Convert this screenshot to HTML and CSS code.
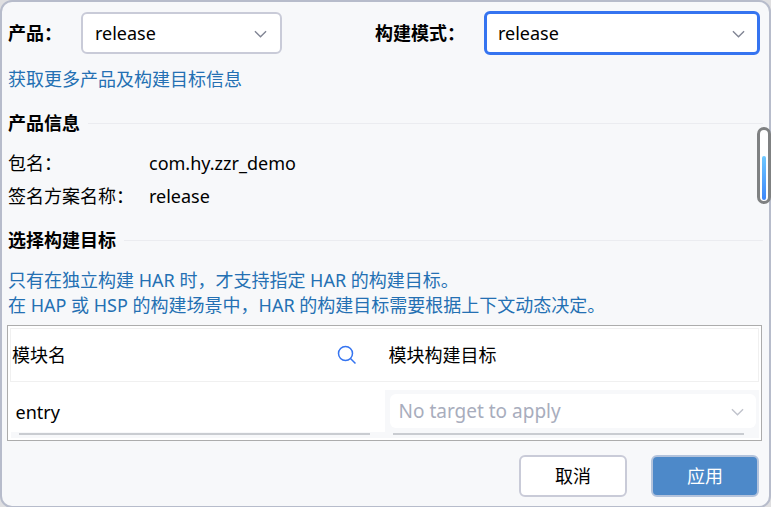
FILE: index.html
```html
<!DOCTYPE html>
<html lang="zh-CN">
<head>
    <meta charset="UTF-8">
    <title>构建配置</title>
    <link rel="stylesheet" href="styles.css">
</head>
<body>
    <form class="dialog">
        <div class="top-row">
            <div class="field">
                <label for="product">产品：</label>
                <div class="select-box">
                    <select id="product">
                        <option>release</option>
                    </select>
                    <svg class="arrow" viewBox="0 0 14 8"><path d="M1 1l6 6 6-6"/></svg>
                </div>
            </div>
            <div class="field field-mode">
                <label for="buildMode">构建模式：</label>
                <div class="select-box focused">
                    <select id="buildMode">
                        <option>release</option>
                    </select>
                    <svg class="arrow" viewBox="0 0 14 8"><path d="M1 1l6 6 6-6"/></svg>
                </div>
            </div>
        </div>

        <a class="more-link" href="#">获取更多产品及构建目标信息</a>

        <h2>产品信息</h2>
        <dl class="info">
            <dt>包名：</dt>
            <dd>com.hy.zzr_demo</dd>
            <dt>签名方案名称：</dt>
            <dd>release</dd>
        </dl>

        <h2>选择构建目标</h2>
        <p class="note">只有在独立构建 HAR 时，才支持指定 HAR 的构建目标。<br>在 HAP 或 HSP 的构建场景中，HAR 的构建目标需要根据上下文动态决定。</p>

        <div class="table-box">
            <table>
                <thead>
                    <tr>
                        <th>
                            <div class="head-cell">
                                模块名
                                <button type="button" class="search" aria-label="搜索">
                                    <svg viewBox="0 0 20 20"><circle cx="8.5" cy="8.5" r="7"/><path d="M13.5 13.5l5 5"/></svg>
                                </button>
                            </div>
                        </th>
                        <th class="target-head">模块构建目标</th>
                    </tr>
                </thead>
                <tbody>
                    <tr>
                        <td class="module">entry</td>
                        <td class="target">
                            <div class="select-box">
                                <select aria-label="模块构建目标" disabled>
                                    <option>No target to apply</option>
                                </select>
                                <svg class="arrow" viewBox="0 0 14 8"><path d="M1 1l6 6 6-6"/></svg>
                            </div>
                        </td>
                    </tr>
                    <tr class="scroll-row">
                        <td><div class="scrollbar"></div></td>
                        <td><div class="scrollbar"></div></td>
                    </tr>
                </tbody>
            </table>
        </div>

        <div class="buttons">
            <button type="button" class="btn">取消</button>
            <button type="submit" class="btn btn-apply">应用</button>
        </div>

        <!-- floating level gauge on the right edge -->
        <div class="gauge"><div class="gauge-fill"></div></div>
    </form>
</body>
</html>
```
FILE: styles.css
```css
* {
    box-sizing: border-box;
}

body {
    margin: 0;
    background-color: #dfdfe1;
    color: #000000;
    font-family: "Noto Sans", "Noto Sans CJK SC", sans-serif;
    font-size: 18px;
    line-height: 24px;
}

select,
button {
    font: inherit;
    color: inherit;
}

.dialog {
    position: relative;
    min-height: 100vh;
    padding: 9px 9px 9px 6px;
    background-color: #f7f8fa;
    border: 2px solid #b7bccb;
    border-radius: 12px;
}

.top-row {
    display: grid;
    grid-template-columns: 274fr 385fr;
    column-gap: 93px;
    align-items: center;
}

.field {
    display: grid;
    grid-template-columns: 73px 1fr;
    align-items: center;
}

.field-mode {
    grid-template-columns: 109px 1fr;
}

.field label {
    font-weight: bold;
}

.select-box {
    position: relative;
}

.select-box select {
    display: block;
    width: 100%;
    height: 42px;
    padding: 0 36px 0 12px;
    appearance: none;
    background-color: #ffffff;
    border: 2px solid #c9cbd8;
    border-radius: 6px;
    outline: none;
}

.focused select {
    height: 44px;
    padding-left: 11px;
    border: 3px solid #3574f0;
}

.arrow {
    position: absolute;
    top: 50%;
    right: 15px;
    width: 13px;
    height: 8px;
    margin-top: -3px;
    fill: none;
    stroke: #818594;
    stroke-width: 1.5;
    pointer-events: none;
}

.more-link {
    display: block;
    margin-top: 12px;
    color: #2470b3;
    text-decoration: none;
}

h2 {
    display: flex;
    align-items: center;
    gap: 8px;
    margin: 20px -3px 0 0;
    font-size: 18px;
    line-height: 24px;
}

h2::after {
    content: "";
    flex: 1;
    height: 1px;
    background-color: #ebecf0;
}

.info {
    display: grid;
    grid-template-columns: 141px 1fr;
    margin: 12px 0 -5px;
    line-height: 33px;
}

.info dd {
    margin: 0;
}

.note {
    margin: 16px 0 7px;
    color: #2470b3;
    line-height: 25px;
}

.table-box {
    margin: 0 -2px 0 -1px;
    padding: 2px;
    background-color: #ffffff;
    border: 1px solid #acacac;
}

table {
    width: 100%;
    border-collapse: collapse;
    table-layout: fixed;
}

thead {
    border: 1px solid #f0f0f0;
}

th,
td {
    padding: 0;
    font-weight: normal;
    text-align: left;
}

th {
    height: 53px;
    padding-left: 1px;
}

.target-head {
    padding-left: 4px;
}

.head-cell {
    display: flex;
    align-items: center;
    justify-content: space-between;
    padding-right: 28px;
}

.search {
    display: flex;
    padding: 0;
    background: none;
    border: none;
    cursor: pointer;
}

.search svg {
    width: 20px;
    height: 20px;
    fill: none;
    stroke: #3574f0;
    stroke-width: 1.5;
}

.module {
    padding: 9px 0 0 5px;
}

.target {
    padding-top: 8px;
}

.target .select-box {
    padding: 4px 3px 4px 5px;
    background-color: #f7f8fa;
}

.target select {
    height: 34px;
    padding-left: 9px;
    border: none;
    color: #a8adbd;
    font-size: 19px;
    opacity: 1;
}

.target .arrow {
    stroke: #c0c3cc;
}

.scroll-row {
    background-color: #f7f8fa;
}

.scrollbar {
    height: 2px;
    margin: 1px 15px 3px 8px;
    background-color: #c9ccd1;
}

.buttons {
    display: flex;
    justify-content: flex-end;
    gap: 24px;
    margin: 14px 1px 0 0;
}

.btn {
    width: 108px;
    height: 42px;
    padding: 0;
    background-color: #ffffff;
    border: 2px solid #c9cbd8;
    border-radius: 6px;
    cursor: pointer;
}

.btn-apply {
    background-color: #4d89c9;
    border-color: #b3c3dc;
    color: #ffffff;
}

.gauge {
    position: absolute;
    top: 125px;
    right: -2px;
    display: flex;
    align-items: flex-end;
    width: 14px;
    height: 77px;
    padding: 1px 2px;
    background-color: #ffffff;
    border: 3px solid #7f8182;
    border-radius: 7px;
}

.gauge-fill {
    width: 100%;
    height: 44px;
    background: linear-gradient(#6ec8ff, #3d86fa);
    border-radius: 2px;
}
```
